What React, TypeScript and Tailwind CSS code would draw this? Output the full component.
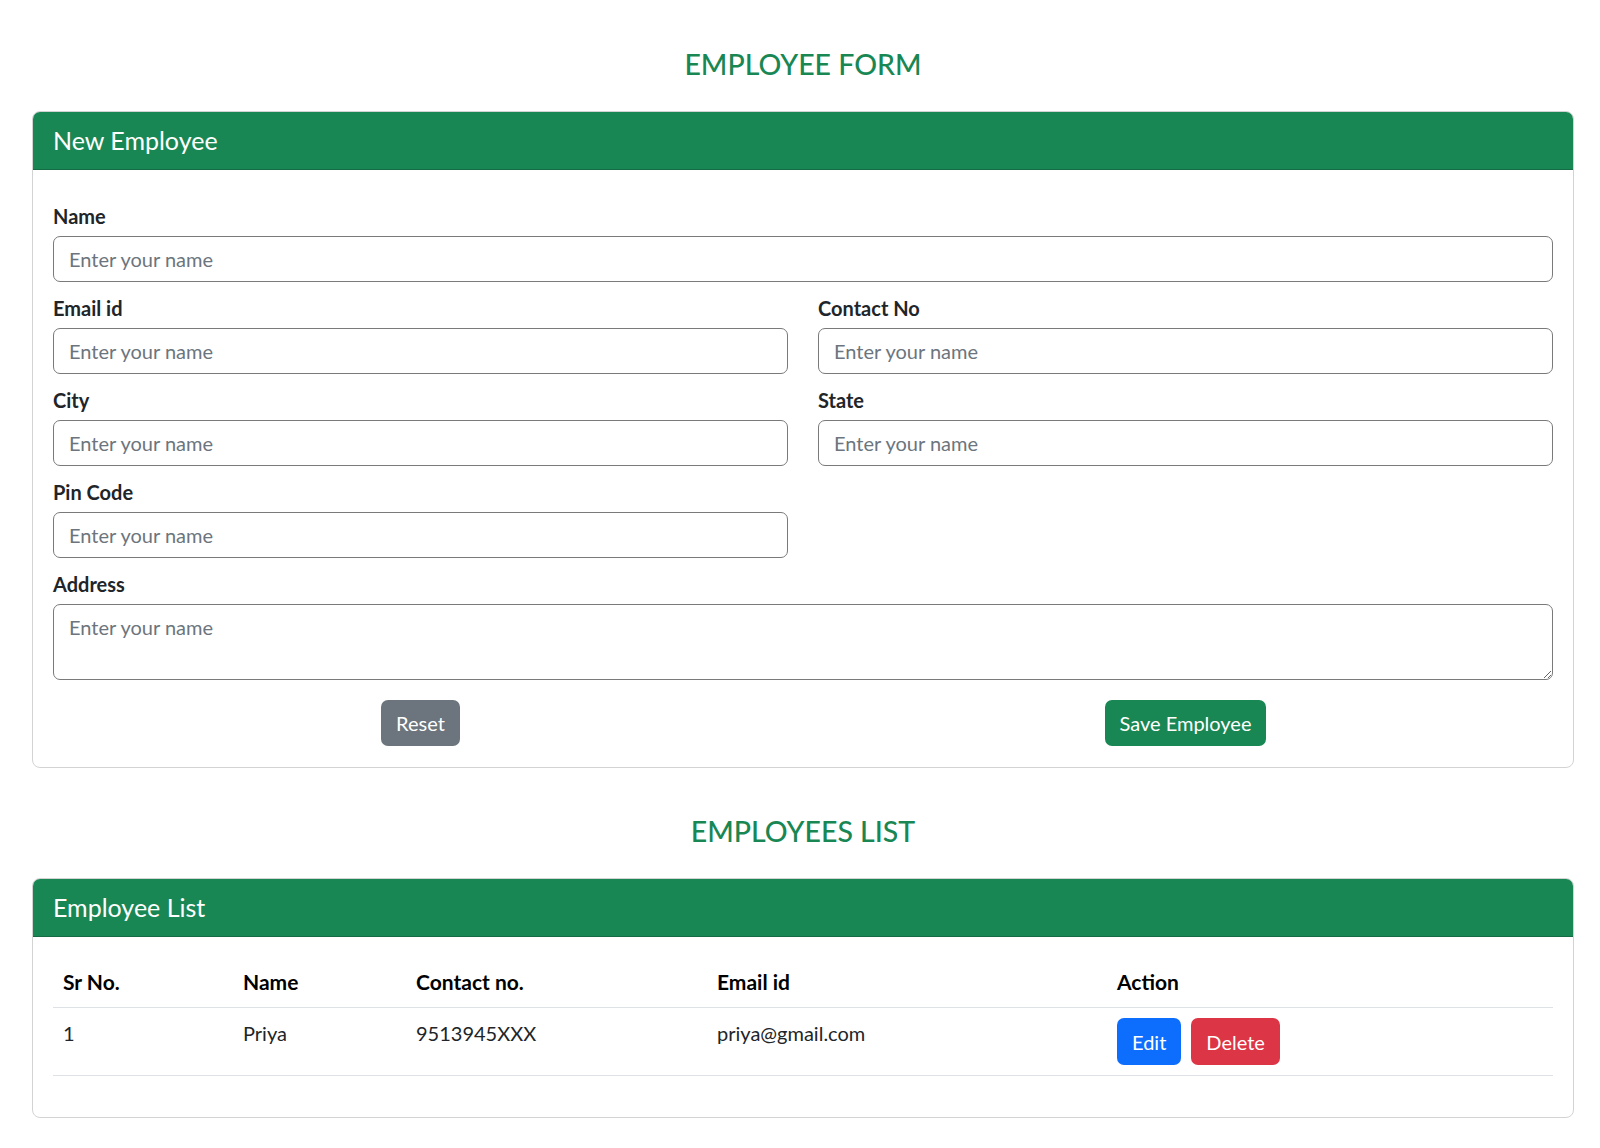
import React from "react";

const font = { fontFamily: "'Segoe UI', Lato, 'Liberation Sans', sans-serif" };

function Field({ label, area }: { label: string; area?: boolean }) {
  return (
    <div className="mt-[13px]">
      <label className="block text-[20px] font-bold leading-[26px] text-[#212529] mb-[7px]">{label}</label>
      {area ? (
        <textarea
          rows={2}
          placeholder="Enter your name"
          className="block w-full h-[76px] rounded-[7px] border border-[#7a7a7a] bg-white px-[15px] py-[7px] text-[20px] leading-[30px] text-[#212529] placeholder:text-[#6c757d] outline-none"
        />
      ) : (
        <input
          type="text"
          placeholder="Enter your name"
          className="block w-full h-[46px] rounded-[7px] border border-[#7a7a7a] bg-white px-[15px] text-[20px] text-[#212529] placeholder:text-[#6c757d] outline-none"
        />
      )}
    </div>
  );
}

function CardHeader({ title }: { title: string }) {
  return (
    <div className="h-[58px] flex items-center px-5 bg-[#198754] border-b border-[#156c44] rounded-t-[7px] text-white text-[25px]">
      {title}
    </div>
  );
}

export default function App() {
  return (
    <div className="bg-white min-h-screen text-[#212529]" style={font}>
      <div className="ml-[32px] mr-[26px] pb-8">
        {/* form */}
        <h4 className="pt-[46px] text-center text-[28.5px] leading-[36px] font-medium text-[#198754]">EMPLOYEE FORM</h4>
        <div className="mt-[29px] rounded-[8px] border border-[#d3d3d3]">
          <CardHeader title="New Employee" />
          <div className="px-5 pt-5 pb-[21px]">
            <Field label="Name" />
            <div className="grid grid-cols-2 gap-x-[30px]">
              <Field label="Email id" />
              <Field label="Contact No" />
              <Field label="City" />
              <Field label="State" />
              <Field label="Pin Code" />
              <div />
            </div>
            <Field label="Address" area />
            <div className="grid grid-cols-2 gap-x-[30px] mt-5">
              <div className="flex justify-center">
                <button className="h-[46px] px-[15px] rounded-[7px] bg-[#6c757d] text-white text-[20px]">Reset</button>
              </div>
              <div className="flex justify-center">
                <button className="h-[46px] px-[15px] rounded-[7px] bg-[#198754] text-white text-[20px]">Save Employee</button>
              </div>
            </div>
          </div>
        </div>

        {/* list */}
        <h4 className="mt-[45px] text-center text-[28.5px] leading-[36px] font-medium text-[#198754]">EMPLOYEES LIST</h4>
        <div className="mt-[29px] rounded-[8px] border border-[#d3d3d3]">
          <CardHeader title="Employee List" />
          <div className="p-5">
            <table className="w-full mb-[21px] text-[20px] leading-[30px] text-left">
              <thead>
                <tr className="border-b border-[#dee2e6] text-black text-[21px]">
                  <th className="w-[180px] p-[10px] font-bold">Sr No.</th>
                  <th className="w-[173px] p-[10px] font-bold">Name</th>
                  <th className="w-[301px] p-[10px] font-bold">Contact no.</th>
                  <th className="w-[400px] p-[10px] font-bold">Email id</th>
                  <th className="p-[10px] font-bold">Action</th>
                </tr>
              </thead>
              <tbody>
                <tr className="border-b border-[#dee2e6] align-top">
                  <td className="p-[10px]">1</td>
                  <td className="p-[10px]">Priya</td>
                  <td className="p-[10px]">9513945XXX</td>
                  <td className="p-[10px]">priya@gmail.com</td>
                  <td className="p-[10px]">
                    <div className="flex gap-[10px]">
                      <button className="h-[47px] px-[15px] rounded-[7px] bg-[#0d6efd] text-white">Edit</button>
                      <button className="h-[47px] px-[15px] rounded-[7px] bg-[#dc3545] text-white">Delete</button>
                    </div>
                  </td>
                </tr>
              </tbody>
            </table>
          </div>
        </div>
      </div>
    </div>
  );
}
